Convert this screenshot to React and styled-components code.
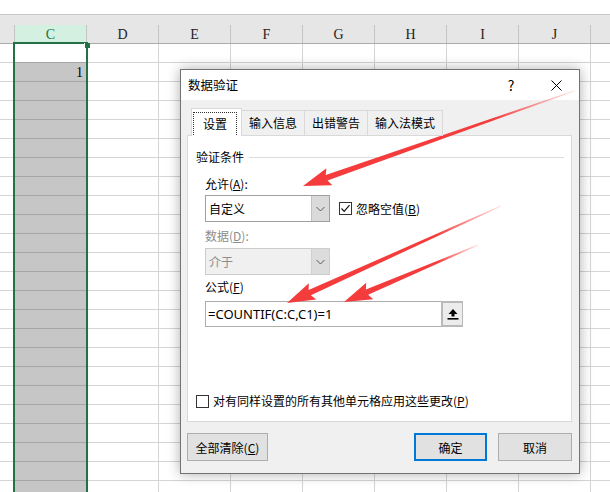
import React from 'react'
import styled, { createGlobalStyle } from 'styled-components'

const GlobalStyle = createGlobalStyle`
  html, body {
    margin: 0;
    padding: 0;
    background: #fff;
    overflow: hidden;
  }
`

const UI_FONT = `"Noto Sans CJK SC", "Noto Sans", sans-serif`
const CELL_FONT = `"Liberation Serif", "DejaVu Serif", serif`

const COLS = ['C', 'D', 'E', 'F', 'G', 'H', 'I', 'J']
const ROW_COUNT = 24

// arrows as drawn on the screenshot: tail -> tip
const ARROWS = [
    [574, 91, 303, 186],
    [501, 206, 287, 303],
    [478, 245, 344, 302],
]

const arrowPoints = (x1, y1, x2, y2) => {
    const len = Math.hypot(x2 - x1, y2 - y1)
    const ux = (x2 - x1) / len
    const uy = (y2 - y1) / len
    const nx = -uy
    const ny = ux
    const headLen = 25
    const headHalf = 9
    const shaftHalf = 2.8
    const tailHalf = 0.4
    const bx = x2 - ux * headLen
    const by = y2 - uy * headLen
    const pts = [
        [x1 + nx * tailHalf, y1 + ny * tailHalf],
        [bx + nx * shaftHalf, by + ny * shaftHalf],
        [bx - ux * 3 + nx * headHalf, by - uy * 3 + ny * headHalf],
        [x2, y2],
        [bx - ux * 3 - nx * headHalf, by - uy * 3 - ny * headHalf],
        [bx - nx * shaftHalf, by - ny * shaftHalf],
        [x1 - nx * tailHalf, y1 - ny * tailHalf],
    ]
    return pts.map(p => p[0].toFixed(1) + ',' + p[1].toFixed(1)).join(' ')
}

const Sheet = styled.div`
    position: relative;
    width: 610px;
    height: 492px;
    overflow: hidden;
    background: #fff;
`

const TopStrip = styled.div`
    height: 14px;
    background: #fff;
    border-bottom: 1px solid #c8c8c8;
`

const HeaderBand = styled.div`
    height: 28px;
    background: #e6e6e6;
    border-bottom: 1px solid #ababab;
    display: flex;
    align-items: flex-end;
`

const HeaderCell = styled.div`
    flex: none;
    width: ${p => p.$w}px;
    height: 18px;
    box-sizing: border-box;
    border-right: 1px solid #c4c4c4;
    background: ${p => (p.$active ? '#d3f0e0' : 'transparent')};
    color: ${p => (p.$active ? '#217346' : '#222')};
    font-family: ${CELL_FONT};
    font-size: 14px;
    line-height: 20px;
    text-align: center;
`

const Row = styled.div`
    display: flex;
    height: 19px;
`

const Cell = styled.div`
    flex: none;
    width: ${p => p.$w}px;
    height: 19px;
    box-sizing: border-box;
    border-right: 1px solid #d4d4d4;
    border-bottom: 1px solid ${p => (p.$dark ? '#a6a6a6' : '#d4d4d4')};
    background: ${p => (p.$sel ? '#c6c6c6' : '#fff')};
    font-family: ${CELL_FONT};
    font-size: 14px;
    line-height: 19px;
    text-align: right;
    padding-right: 3px;
    color: #000;
`

const Selection = styled.div`
    position: absolute;
    left: 13px;
    top: 42px;
    width: 75px;
    bottom: -4px;
    box-sizing: border-box;
    border: 2px solid #217346;
    pointer-events: none;
`

const FillHandle = styled.span`
    position: absolute;
    right: -4px;
    top: -1px;
    width: 5px;
    height: 5px;
    background: #217346;
    border-left: 1px solid #fff;
`

const Dialog = styled.div`
    position: absolute;
    left: 180px;
    top: 69px;
    width: 400px;
    height: 405px;
    box-sizing: border-box;
    border: 1px solid #727272;
    background: #f0f0f0;
    box-shadow: 0 0 12px rgba(0, 0, 0, 0.32);
    display: flex;
    flex-direction: column;
    font-family: ${UI_FONT};
    font-size: 12px;
    color: #000;
`

const TitleBar = styled.div`
    height: 30px;
    flex: none;
    background: #fff;
    display: flex;
    align-items: center;
    padding-left: 7px;
`

const Title = styled.div`
    flex: 1;
    font-size: 12.5px;
    line-height: 16px;
`

const TitleButton = styled.div`
    width: ${p => p.$w}px;
    height: 30px;
    display: flex;
    align-items: center;
    justify-content: center;
    margin-right: ${p => p.$mr || 0}px;
    font-size: 14px;
`

const Body = styled.div`
    flex: 1;
    padding: 9px 7px 10px 6px;
    display: flex;
    flex-direction: column;
`

const Tabs = styled.div`
    display: flex;
    align-items: flex-end;
    height: 27px;
    margin-left: 4px;
    position: relative;
    z-index: 1;
    margin-bottom: -1px;
`

const Tab = styled.div`
    box-sizing: border-box;
    height: ${p => (p.$active ? 28 : 26)}px;
    padding: ${p => (p.$active ? '3px 4px 1px 1px' : '0 7px')};
    border: 1px solid #d9d9d9;
    border-bottom: ${p => (p.$active ? 'none' : '1px solid #d9d9d9')};
    margin-left: ${p => (p.$first ? 0 : -1)}px;
    background: ${p => (p.$active ? '#fff' : '#f0f0f0')};
    display: flex;
    align-items: ${p => (p.$active ? 'stretch' : 'center')};
    line-height: 16px;
`

const FocusRect = styled.span`
    display: flex;
    align-items: center;
    padding: 0 9px;
    border: 1px dotted #333;
    border-bottom: none;
`

const Panel = styled.div`
    height: 287px;
    box-sizing: border-box;
    border: 1px solid #d9d9d9;
    background: #fff;
    display: flex;
    flex-direction: column;
    padding: 13px 7px 0 8px;
`

const GroupHeader = styled.div`
    display: flex;
    align-items: center;
    height: 16px;
    line-height: 16px;
    &::after {
        content: '';
        flex: 1;
        height: 1px;
        background: #dcdcdc;
        margin-left: 5px;
    }
`

const Field = styled.div`
    margin-left: 9px;
    display: flex;
    flex-direction: column;
`

const Label = styled.div`
    height: 16px;
    line-height: 16px;
    margin-top: ${p => p.$mt}px;
    color: ${p => (p.$disabled ? '#8d8d8d' : '#000')};
`

const Inline = styled.div`
    display: flex;
    align-items: center;
    margin-top: ${p => p.$mt || 0}px;
`

const Select = styled.div`
    width: 125px;
    height: 27px;
    box-sizing: border-box;
    border: 1px solid ${p => (p.$disabled ? '#cccccc' : '#a0a0a0')};
    background: ${p => (p.$disabled ? '#f0f0f0' : '#fff')};
    display: flex;
    color: ${p => (p.$disabled ? '#8d8d8d' : '#000')};
`

const SelectText = styled.div`
    flex: 1;
    padding-left: 3px;
    line-height: 25px;
`

const SelectButton = styled.div`
    width: 17px;
    background: ${p => (p.$disabled ? '#dcdcdc' : '#dadada')};
    border-left: 1px solid ${p => (p.$disabled ? '#d0d0d0' : '#c2c2c2')};
    display: flex;
    align-items: center;
    justify-content: center;
`

const CheckBox = styled.span`
    width: 13px;
    height: 13px;
    box-sizing: border-box;
    border: 1px solid #333;
    background: #fff;
    display: inline-flex;
    align-items: center;
    justify-content: center;
    margin-right: 4px;
    flex: none;
`

const CheckLabel = styled.label`
    display: flex;
    align-items: center;
    margin-left: ${p => p.$ml || 0}px;
    line-height: 16px;
`

const FormulaBox = styled.div`
    width: 258px;
    height: 26px;
    box-sizing: border-box;
    border: 1px solid #adadad;
    display: flex;
    margin-top: 6px;
`

const FormulaText = styled.div`
    flex: 1;
    padding-left: 2px;
    font-family: "Noto Sans", "Liberation Sans", sans-serif;
    font-size: 13px;
    line-height: 24px;
`

const RefButton = styled.div`
    width: 22px;
    box-sizing: border-box;
    border: 2px solid #b9b9b9;
    border-right-width: 1px;
    background: #ececec;
    display: flex;
    align-items: center;
    justify-content: center;
    margin: -1px -1px -1px 0;
`

const ApplyRow = styled.div`
    margin-top: auto;
    margin-bottom: 12px;
`

const Footer = styled.div`
    display: flex;
    margin-top: 11px;
`

const Button = styled.div`
    height: 28px;
    width: ${p => p.$w}px;
    box-sizing: border-box;
    border: ${p => (p.$default ? '2px solid #0078d7' : '1px solid #adadad')};
    background: #e1e1e1;
    display: flex;
    align-items: center;
    justify-content: center;
    margin-left: ${p => p.$ml || 0}px;
`

const Overlay = styled.svg`
    position: absolute;
    left: 0;
    top: 0;
    pointer-events: none;
`

const Chevron = () => (
    <svg width="9" height="6" viewBox="0 0 9 6">
        <polyline points="0.5,1 4.5,5 8.5,1" fill="none" stroke="#5a5a5a" strokeWidth="1" />
    </svg>
)

const Check = () => (
    <svg width="11" height="11" viewBox="0 0 11 11">
        <polyline points="1.5,5.5 4.2,8.3 9.5,2.2" fill="none" stroke="#111" strokeWidth="1.2" />
    </svg>
)

const UpIcon = () => (
    <svg width="12" height="12" viewBox="0 0 12 12">
        <polygon points="6,1 1.5,6 4.5,6 4.5,8.5 7.5,8.5 7.5,6 10.5,6" fill="#000" />
        <rect x="0.5" y="10" width="11" height="1.6" fill="#000" />
    </svg>
)

const Mn = styled.span`
    text-decoration: underline;
    text-underline-offset: 1px;
`

const App = () => {
    const widths = [15, ...COLS.map(() => 72), 30]
    return (
        <Sheet>
            <GlobalStyle />
            <TopStrip />
            <HeaderBand>
                {widths.map((w, i) => (
                    <HeaderCell key={i} $w={w} $active={i === 1}>
                        {i > 0 && i <= COLS.length ? COLS[i - 1] : ''}
                    </HeaderCell>
                ))}
            </HeaderBand>
            {Array.from({ length: ROW_COUNT }).map((_, r) => (
                <Row key={r}>
                    {widths.map((w, i) => (
                        <Cell key={i} $w={w} $sel={i === 1 && r > 0} $dark={i === 1}>
                            {i === 1 && r === 1 ? '1' : ''}
                        </Cell>
                    ))}
                </Row>
            ))}
            <Selection>
                <FillHandle />
            </Selection>

            <Dialog>
                <TitleBar>
                    <Title>数据验证</Title>
                    <TitleButton $w={30} $mr={7}>?</TitleButton>
                    <TitleButton $w={46}>
                        <svg width="11" height="11" viewBox="0 0 11 11">
                            <path d="M0.5 0.5 L10.5 10.5 M10.5 0.5 L0.5 10.5" stroke="#000" strokeWidth="1" />
                        </svg>
                    </TitleButton>
                </TitleBar>
                <Body>
                    <Tabs>
                        <Tab $active $first>
                            <FocusRect>设置</FocusRect>
                        </Tab>
                        <Tab>输入信息</Tab>
                        <Tab>出错警告</Tab>
                        <Tab>输入法模式</Tab>
                    </Tabs>
                    <Panel>
                        <GroupHeader>验证条件</GroupHeader>
                        <Field>
                            <Label $mt={11}>允许(<Mn>A</Mn>):</Label>
                            <Inline $mt={3}>
                                <Select>
                                    <SelectText>自定义</SelectText>
                                    <SelectButton><Chevron /></SelectButton>
                                </Select>
                                <CheckLabel $ml={9}>
                                    <CheckBox><Check /></CheckBox>
                                    忽略空值(<Mn>B</Mn>)
                                </CheckLabel>
                            </Inline>
                            <Label $mt={6} $disabled>数据(<Mn>D</Mn>):</Label>
                            <Inline $mt={4}>
                                <Select $disabled>
                                    <SelectText>介于</SelectText>
                                    <SelectButton $disabled><Chevron /></SelectButton>
                                </Select>
                            </Inline>
                            <Label $mt={4}>公式(<Mn>F</Mn>)</Label>
                            <FormulaBox>
                                <FormulaText>=COUNTIF(C:C,C1)=1</FormulaText>
                                <RefButton><UpIcon /></RefButton>
                            </FormulaBox>
                        </Field>
                        <ApplyRow>
                            <CheckLabel>
                                <CheckBox />
                                对有同样设置的所有其他单元格应用这些更改(<Mn>P</Mn>)
                            </CheckLabel>
                        </ApplyRow>
                    </Panel>
                    <Footer>
                        <Button $w={81}>全部清除(<Mn>C</Mn>)</Button>
                        <Button $w={73} $ml={146} $default>确定</Button>
                        <Button $w={74} $ml={11}>取消</Button>
                    </Footer>
                </Body>
            </Dialog>

            <Overlay width="610" height="492" viewBox="0 0 610 492">
                <defs>
                    {ARROWS.map(([x1, y1, x2, y2], i) => (
                        <linearGradient
                            key={i}
                            id={'fade' + i}
                            gradientUnits="userSpaceOnUse"
                            x1={x1}
                            y1={y1}
                            x2={x1 + (x2 - x1) * 0.3}
                            y2={y1 + (y2 - y1) * 0.3}
                        >
                            <stop offset="0" stopColor="#ff4a4a" stopOpacity="0.15" />
                            <stop offset="1" stopColor="#f53c3c" stopOpacity="1" />
                        </linearGradient>
                    ))}
                </defs>
                {ARROWS.map(([x1, y1, x2, y2], i) => (
                    <polygon key={i} points={arrowPoints(x1, y1, x2, y2)} fill={`url(#fade${i})`} />
                ))}
            </Overlay>
        </Sheet>
    )
}

export default App
